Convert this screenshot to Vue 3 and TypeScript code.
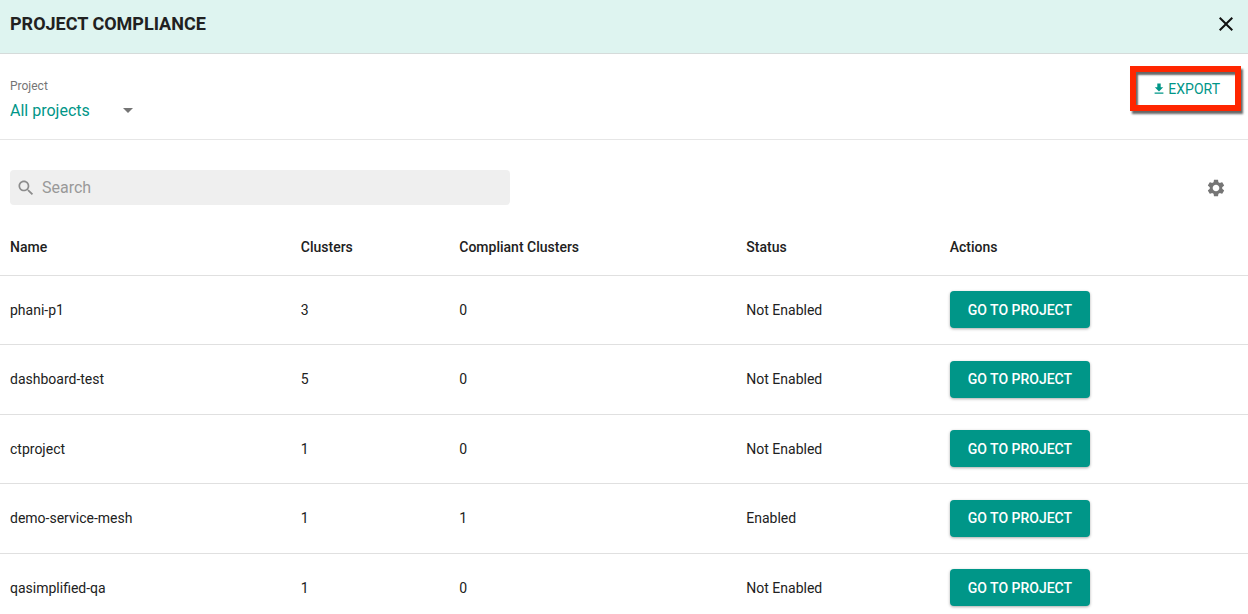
<script setup lang="ts">
import { ref, computed } from 'vue'

interface Project {
  name: string
  clusters: number
  compliant: number
  status: 'Enabled' | 'Not Enabled'
}

const projects: Project[] = [
  { name: 'phani-p1', clusters: 3, compliant: 0, status: 'Not Enabled' },
  { name: 'dashboard-test', clusters: 5, compliant: 0, status: 'Not Enabled' },
  { name: 'ctproject', clusters: 1, compliant: 0, status: 'Not Enabled' },
  { name: 'demo-service-mesh', clusters: 1, compliant: 1, status: 'Enabled' },
  { name: 'qasimplified-qa', clusters: 1, compliant: 0, status: 'Not Enabled' },
]

const selected = ref('All projects')
const query = ref('')

const rows = computed(() =>
  projects.filter((p) => p.name.includes(query.value.trim().toLowerCase())),
)
</script>

<template>
  <main class="page">
    <header class="titlebar">
      <h1>PROJECT COMPLIANCE</h1>
      <button class="icon-button close" type="button" aria-label="Close">
        <svg viewBox="0 0 24 24" width="24" height="24">
          <path d="M19 6.41L17.59 5 12 10.59 6.41 5 5 6.41 10.59 12 5 17.59 6.41 19 12 13.41 17.59 19 19 17.59 13.41 12z" />
        </svg>
      </button>
    </header>

    <section class="filters">
      <div class="field">
        <label for="project">Project</label>
        <div class="select">
          <select id="project" v-model="selected">
            <option>All projects</option>
          </select>
          <svg viewBox="0 0 24 24" width="24" height="24" aria-hidden="true">
            <path d="M7 10l5 5 5-5z" />
          </svg>
        </div>
      </div>
      <div class="highlight">
        <button class="export" type="button">
          <svg viewBox="0 0 10 12" width="10" height="12" aria-hidden="true">
            <path d="M3.3 0.6h3.4v3.6h2.5L5 8.4 0.8 4.2h2.5zM0.6 9.6h8.8v1.2H0.6z" />
          </svg>
          EXPORT
        </button>
      </div>
    </section>

    <section class="toolbar">
      <label class="search">
        <svg viewBox="0 0 24 24" width="20" height="20" aria-hidden="true">
          <path d="M15.5 14h-.79l-.28-.27C15.41 12.59 16 11.11 16 9.5 16 5.91 13.09 3 9.5 3S3 5.91 3 9.5 5.91 16 9.5 16c1.61 0 3.09-.59 4.23-1.57l.27.28v.79l5 4.99L20.49 19l-4.99-5zm-6 0C7.01 14 5 11.99 5 9.5S7.01 5 9.5 5 14 7.01 14 9.5 11.99 14 9.5 14z" />
        </svg>
        <input v-model="query" type="text" placeholder="Search" aria-label="Search" />
      </label>
      <button class="icon-button settings" type="button" aria-label="Settings">
        <svg viewBox="0 0 24 24" width="20" height="20">
          <path d="M19.43 12.98c.04-.32.07-.64.07-.98s-.03-.66-.07-.98l2.11-1.65c.19-.15.24-.42.12-.64l-2-3.46c-.12-.22-.39-.3-.61-.22l-2.49 1c-.52-.4-1.08-.73-1.69-.98l-.38-2.65C14.46 2.18 14.25 2 14 2h-4c-.25 0-.46.18-.49.42l-.38 2.65c-.61.25-1.17.59-1.69.98l-2.49-1c-.23-.09-.49 0-.61.22l-2 3.46c-.13.22-.07.49.12.64l2.11 1.65c-.04.32-.07.65-.07.98s.03.66.07.98l-2.11 1.65c-.19.15-.24.42-.12.64l2 3.46c.12.22.39.3.61.22l2.49-1c.52.4 1.08.73 1.69.98l.38 2.65c.03.24.24.42.49.42h4c.25 0 .46-.18.49-.42l.38-2.65c.61-.25 1.17-.59 1.69-.98l2.49 1c.23.09.49 0 .61-.22l2-3.46c.12-.22.07-.49-.12-.64l-2.11-1.65zM12 16c-2.2 0-4-1.8-4-4s1.8-4 4-4 4 1.8 4 4-1.8 4-4 4z" />
        </svg>
      </button>
    </section>

    <table>
      <colgroup>
        <col class="c-name" />
        <col class="c-clusters" />
        <col class="c-compliant" />
        <col class="c-status" />
        <col />
      </colgroup>
      <thead>
        <tr>
          <th scope="col">Name</th>
          <th scope="col">Clusters</th>
          <th scope="col">Compliant Clusters</th>
          <th scope="col">Status</th>
          <th scope="col">Actions</th>
        </tr>
      </thead>
      <tbody>
        <tr v-for="p in rows" :key="p.name">
          <td>{{ p.name }}</td>
          <td>{{ p.clusters }}</td>
          <td>{{ p.compliant }}</td>
          <td>{{ p.status }}</td>
          <td><button class="go" type="button">GO TO PROJECT</button></td>
        </tr>
      </tbody>
    </table>
  </main>
</template>

<style>
html {
  overflow: hidden;
}
</style>

<style scoped>
.page {
  font-family: Roboto, "Liberation Sans", sans-serif;
  font-size: 14px;
  color: #212121;
  background: #fff;
}
button,
select,
input {
  font: inherit;
  color: inherit;
  border: 0;
  margin: 0;
  padding: 0;
  background: none;
}
button {
  cursor: pointer;
}
svg {
  display: block;
  fill: currentColor;
  flex: none;
}
.titlebar {
  display: flex;
  align-items: flex-start;
  justify-content: space-between;
  padding: 12px 10px 17px;
  background: #def4f0;
  border-bottom: 1px solid #d5dbda;
}
h1 {
  margin: 0;
  font-size: 18px;
  line-height: 24px;
  font-weight: 700;
}
.close {
  color: #111;
}
.filters {
  display: flex;
  align-items: flex-start;
  justify-content: space-between;
  padding: 12px 7px 17px 10px;
  border-bottom: 1px solid #e6e6e6;
}
.field {
  padding-top: 12px;
}
label[for="project"] {
  display: block;
  font-size: 12px;
  line-height: 16px;
  color: #757575;
}
.select {
  display: grid;
  grid-template-columns: 106px 24px;
  margin-top: 4px;
  align-items: center;
}
.select select {
  grid-area: 1 / 1 / 2 / 3;
  appearance: none;
  height: 24px;
  font-size: 16px;
  color: #009688;
}
.select svg {
  grid-area: 1 / 2;
  color: #757575;
  pointer-events: none;
}
.highlight {
  border: 6px solid #ff2600;
  box-shadow: 2px 3px 2px #0009, inset 2px 3px 2px #0009;
}
.export {
  display: flex;
  align-items: center;
  gap: 4px;
  height: 33px;
  padding: 0 15px 0 18px;
  color: #009688;
}
.toolbar {
  display: flex;
  align-items: center;
  justify-content: space-between;
  padding: 30px 22px 14px 10px;
}
.search {
  display: flex;
  align-items: center;
  gap: 6px;
  width: 100%;
  max-width: 500px;
  height: 35px;
  padding: 0 6px;
  box-sizing: border-box;
  background: #efefef;
  border-radius: 4px;
  color: #8c8c8c;
}
.search input {
  flex: 1;
  min-width: 0;
  font-size: 16px;
  color: #212121;
  outline: none;
}
.search input::placeholder {
  color: #999;
  opacity: 1;
}
.settings {
  color: #757575;
}
table {
  width: 100%;
  table-layout: fixed;
  border-collapse: separate;
  border-spacing: 0;
}
.c-name {
  width: 23.3%;
}
.c-clusters {
  width: 12.7%;
}
.c-compliant {
  width: 23%;
}
.c-status {
  width: 16.3%;
}
th,
td {
  box-sizing: border-box;
  padding: 0 10px;
  text-align: left;
  border-bottom: 1px solid #e0e0e0;
}
th {
  height: 57px;
  font-weight: 500;
}
td {
  height: 69px;
  padding-bottom: 1px;
}
tbody tr:nth-child(even) td {
  height: 70px;
}
.go {
  display: block;
  height: 37px;
  padding: 0 18px;
  font-weight: 500;
  color: #fff;
  background: #009688;
  border-radius: 4px;
  box-shadow: 0 1px 3px #0005;
}
</style>
